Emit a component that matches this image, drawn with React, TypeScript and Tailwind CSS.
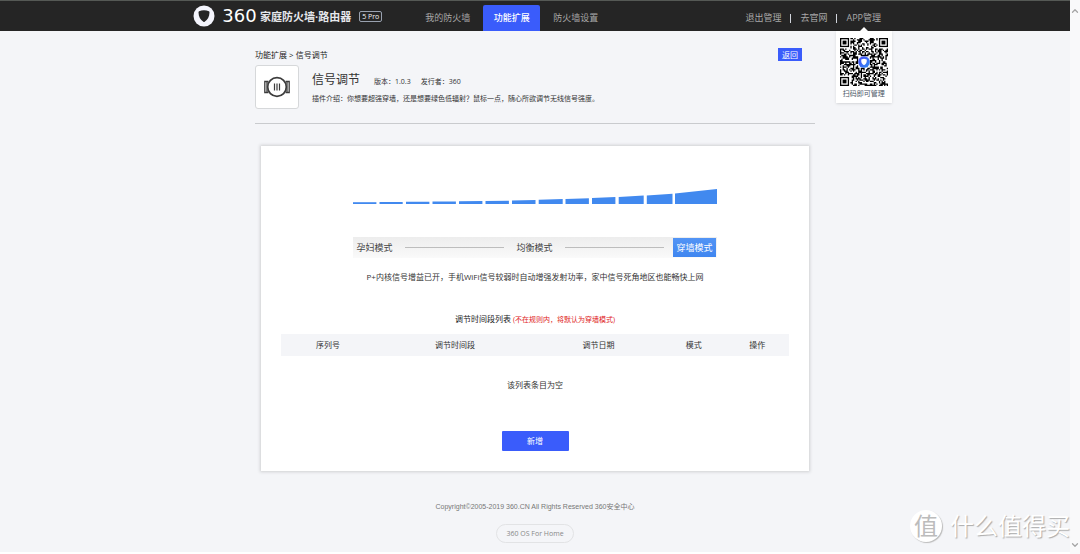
import clsx from 'clsx';
import { ChevronDown, ChevronUp } from 'lucide-react';
import { useState } from 'react';

const NAV_ITEMS = ['我的防火墙', '功能扩展', '防火墙设置'];

const MODES = ['孕妇模式', '均衡模式', '穿墙模式'];

const COLUMNS = [
  { label: '序列号', width: 'w-[18.5%]' },
  { label: '调节时间段', width: 'w-[31.5%]' },
  { label: '调节日期', width: 'w-1/4' },
  { label: '模式', width: 'w-[12.5%]' },
  { label: '操作', width: 'w-[12.5%]' },
];

// x, width, height on the left, height on the right
const BARS = [
  [0, 23.4, 1.8, 1.8],
  [26.5, 23.2, 2, 2],
  [53, 23.4, 2.2, 2.3],
  [79.5, 23.4, 2.5, 2.6],
  [106, 23.4, 2.7, 2.9],
  [132.5, 23.4, 3, 3.3],
  [159, 23.5, 3.6, 4],
  [185.7, 24, 4.3, 5],
  [212.5, 23.4, 5, 5.8],
  [239, 23.4, 5.9, 7],
  [265.7, 25, 6.9, 8.4],
  [293.8, 25.7, 8.5, 10.2],
  [322, 42, 10.5, 15],
];

const QR_SIZE = 37;

function inFinder(x: number, y: number) {
  return (x < 8 && y < 8) || (x > QR_SIZE - 9 && y < 8) || (x < 8 && y > QR_SIZE - 9);
}

function buildModules() {
  let seed = 360;
  let d = '';
  for (let y = 0; y < QR_SIZE; y++) {
    for (let x = 0; x < QR_SIZE; x++) {
      seed = (seed * 16807) % 2147483647;
      const inLogo = Math.abs(x - 18) < 5 && Math.abs(y - 18) < 5;
      if (inFinder(x, y) || inLogo) continue;
      if (seed / 2147483647 > 0.47) d += `M${x} ${y}h1v1h-1z`;
    }
  }
  return d;
}

const QR_PATH = buildModules();

function Finder({ x, y }: { x: number; y: number }) {
  return (
    <g>
      <rect x={x + 0.5} y={y + 0.5} width="6" height="6" fill="none" stroke="#000" />
      <rect x={x + 2} y={y + 2} width="3" height="3" />
    </g>
  );
}

function QrCode() {
  return (
    <svg viewBox="0 0 37 37" className="size-12" role="img" aria-label="QR">
      <defs>
        <linearGradient id="ring" x1="0" y1="0" x2="1" y2="1">
          <stop offset="0" stopColor="#4b4cf5" />
          <stop offset="1" stopColor="#2f8bf5" />
        </linearGradient>
      </defs>
      <path d={QR_PATH} />
      <Finder x={0} y={0} />
      <Finder x={30} y={0} />
      <Finder x={0} y={30} />
      <circle cx="18.5" cy="18.5" r="4.500" fill="url(#ring)" />
      <path d="M18.5 15.9l2.1.6c.2 2-.3 3.600-2.100 4.600-1.800-1-2.300-2.600-2.100-4.600z" fill="#fff" />
    </svg>
  );
}

function Logo() {
  return (
    <div className="flex items-center">
      <svg viewBox="0 0 22 22" className="size-[22px]">
        <circle cx="11" cy="11" r="10.5" fill="#f4f5fd" />
        <path
          d="M11 5.2c1.7 0 3.4.4 4.9 1.1.5.3.7.6.6 1.2-.2 4.200-1.700 7.300-4.900 9.300-.4.3-.8.3-1.200 0-3.200-2-4.700-5.100-4.900-9.300 0-.6.1-.9.600-1.200 1.500-.7 3.200-1.100 4.900-1.100z"
          fill="#252525"
        />
      </svg>
      <span className="ml-1 w-[41px] text-center font-['DejaVu_Sans'] text-lg leading-none text-white">360</span>
      <span className="text-[11px] leading-none font-bold text-gray-200">家庭防火墙·路由器</span>
      <span className="ml-2 rounded-xs border border-gray-400 px-[2px] text-[7px] leading-[9px] text-gray-100">5 Pro</span>
    </div>
  );
}

function Header() {
  return (
    <header className="h-[31px] border-t border-[#555955] bg-[#252525] text-[9px] text-[#a8a8a8]">
      <div className="mx-auto flex h-full max-w-[692px] items-end pl-1">
        <div className="flex h-[30px] items-center">
          <Logo />
        </div>
        <nav className="ml-[37px] flex gap-[7px]">
          {NAV_ITEMS.map((item) => (
            <a
              key={item}
              href="#"
              className={clsx(
                'h-[26px] w-[57px] rounded-t-xs text-center leading-[26px] whitespace-nowrap',
                item === '功能扩展' && 'bg-[#3a5cfb] font-medium text-white'
              )}
            >
              {item}
            </a>
          ))}
        </nav>
        <div className="ml-auto flex h-[26px] items-center gap-[9px]">
          <a href="#">退出管理</a>
          <span className="h-[9px] w-px bg-gray-300" />
          <a href="#">去官网</a>
          <span className="h-[9px] w-px bg-gray-300" />
          <div className="relative">
            <a href="#">APP管理</a>
            {/* QR popover */}
            <div className="absolute top-4 left-1/2 z-10 flex w-14 -translate-x-1/2 flex-col items-center">
              <svg viewBox="0 0 8 4" className="h-1 w-2">
                <path d="M4 0l4 4H0z" fill="#fff" />
              </svg>
              <div className="flex w-full flex-col items-center bg-white pt-[7px] pb-1 shadow-sm">
                <QrCode />
                <span className="mt-[2px] text-[7px] leading-[11px] text-gray-600">扫码即可管理</span>
              </div>
            </div>
          </div>
        </div>
      </div>
    </header>
  );
}

function PluginIntro() {
  return (
    <section className="border-b border-[#c9cbce] pb-[14px]">
      <div className="flex h-[13px] items-center justify-between pr-[13px]">
        <div className="text-[8px] text-[#222]">功能扩展 &gt; 信号调节</div>
        <button className="h-[13px] w-6 bg-[#3a5cfb] text-[8px] leading-[13px] text-white">返回</button>
      </div>
      <div className="mt-1 flex">
        <div className="flex size-11 items-center justify-center rounded-[3px] border border-[#d6d8da] bg-white">
          <svg viewBox="0 0 28 22" className="h-[22px] w-7" fill="none" stroke="#3c3c3c">
            <path d="M5.500 5.500H1.800v11h3.700M22.500 5.500h3.700v11h-3.700M4 5.500v11M24 5.500v11" strokeWidth="1.300" />
            <circle cx="14" cy="11" r="9.300" strokeWidth="1.700" fill="#fff" />
            <path d="M11.500 7.500v7M14 7.500v7M16.500 7.500v7" strokeWidth="1.200" />
          </svg>
        </div>
        <div className="ml-[13px] pt-[5px]">
          <div className="flex h-5 items-baseline text-[7px] text-[#333]">
            <h1 className="text-[12px] leading-5">信号调节</h1>
            <span className="ml-[14px]">版本：1.0.3</span>
            <span className="ml-[10px]">发行者：360</span>
          </div>
          <p className="mt-[3px] text-[7px] leading-[12px] text-[#333]">
            插件介绍：你想要超强穿墙，还是想要绿色低辐射？鼠标一点，随心所欲调节无线信号强度。
          </p>
        </div>
      </div>
    </section>
  );
}

function PowerChart() {
  return (
    <svg viewBox="0 0 364 16" className="h-4 w-[364px]">
      {BARS.map(([x, w, left, right]) => (
        <polygon
          key={x}
          points={`${x},${16 - left} ${x + w},${16 - right} ${x + w},16 ${x},16`}
          fill="#4189ef"
        />
      ))}
    </svg>
  );
}

function ModeBar() {
  const [mode, setMode] = useState('穿墙模式');

  return (
    <div className="mt-[33px] flex h-[21px] w-[364px] items-center bg-gradient-to-b from-[#ededed] to-[#fafafa] pr-px">
      {MODES.map((item, i) => (
        <div key={item} className={clsx('flex items-center', i < MODES.length - 1 && 'flex-1')}>
          <button
            onClick={() => setMode(item)}
            className={clsx(
              'h-[19px] w-[43px] text-[9px] leading-[19px]',
              item === mode ? 'bg-gradient-to-b from-[#5294f5] to-[#3f86f0] text-white' : 'text-[#444]'
            )}
          >
            {item}
          </button>
          {i < MODES.length - 1 && <span className="mx-[9px] h-px flex-1 bg-[#bdbdbd]" />}
        </div>
      ))}
    </div>
  );
}

function Schedule() {
  return (
    <div className="w-full px-5 text-[8px] text-[#333]">
      <table className="w-full table-fixed">
        <caption className="mb-[7px] text-center leading-[14px] text-[#222]">
          调节时间段列表 <span className="text-[7px] text-[#e01b1b]">(不在规则内，将默认为穿墙模式)</span>
        </caption>
        <thead className="bg-[#f4f5f8]">
          <tr className="h-[22px]">
            {COLUMNS.map((col) => (
              <th key={col.label} className={clsx('font-normal', col.width)}>
                {col.label}
              </th>
            ))}
          </tr>
        </thead>
        <tbody>
          <tr className="h-[58px]">
            <td colSpan={5} className="text-center">
              该列表条目为空
            </td>
          </tr>
        </tbody>
      </table>
    </div>
  );
}

function Watermark() {
  return (
    <div className="pointer-events-none absolute right-[10px] bottom-[10px] flex items-center gap-2 text-white">
      <span className="flex size-8 items-center justify-center rounded-full bg-white text-2xl leading-none text-[#bcbcbc] shadow-[1px_1px_1px_#bbb]">
        值
      </span>
      <span className="text-2xl leading-9 [text-shadow:1px_1px_1px_#aaa]">什么值得买</span>
    </div>
  );
}

export default function App() {
  return (
    <div className="relative flex min-h-screen bg-[#f4f5f8] font-['Open_Sans','Noto_Sans_CJK_SC',sans-serif]">
      <div className="min-w-0 flex-1 border-b-2 border-white">
        <Header />

        <main className="mx-auto max-w-[560px] pt-[17px]">
          <PluginIntro />
          <section className="mx-[6px] mt-[22px] flex flex-col items-center bg-white pt-[42px] pb-5 shadow-[0_0_3px_1px_#cfd0d2]">
            <PowerChart />
            <ModeBar />
            <p className="mt-3 mb-7 text-[8px] leading-[14px] text-[#333]">
              P+内核信号增益已开，手机WiFi信号较弱时自动增强发射功率，家中信号死角地区也能畅快上网
            </p>
            <Schedule />
            <button className="mt-[17px] h-5 w-[67px] rounded-[1px] bg-[#3a5cfb] text-[8px] leading-5 text-white">新增</button>
          </section>
        </main>

        <footer className="mt-[29px] flex flex-col items-center">
          <p className="font-['Liberation_Sans','Noto_Sans_CJK_SC',sans-serif] text-[7px] leading-[14px] text-[#777]">
            Copyright©2005-2019 360.CN All Rights Reserved 360安全中心
          </p>
          <a href="#" className="mt-[10px] h-[19px] rounded-full border border-[#e2e3e5] px-[9px] text-[7px] leading-[17px] text-[#888]">
            360 OS For Home
          </a>
        </footer>
      </div>

      {/* Scroll track */}
      <div className="flex w-[10px] flex-col items-center justify-between bg-[#f9f9fa] pt-[6px] pb-1 text-[#a5a5a5]">
        <ChevronUp size={10} strokeWidth={3} />
        <ChevronDown size={10} strokeWidth={3} />
      </div>

      <Watermark />
    </div>
  );
}
